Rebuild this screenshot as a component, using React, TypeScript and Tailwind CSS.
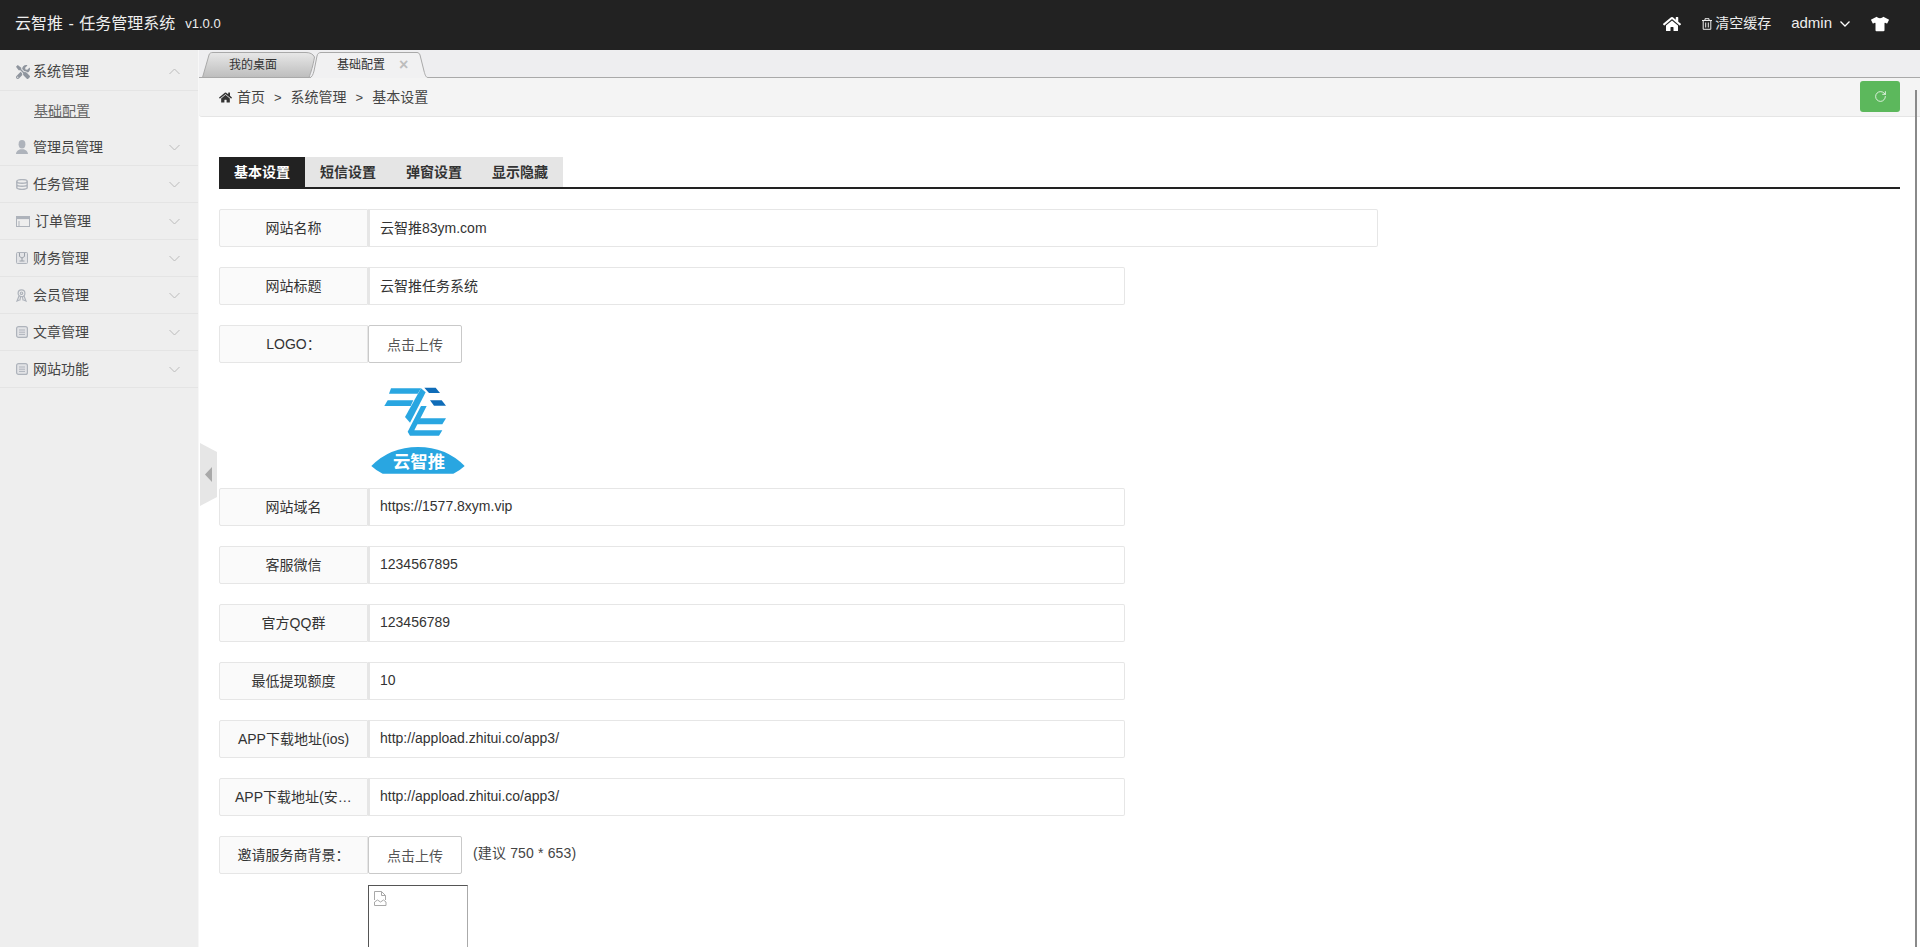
import { RotateCw } from "lucide-react";
import { FaHome, FaTools, FaTshirt } from "react-icons/fa";

// ── Small icons ─────────────────────────────────────────────
function Chevron({ up = false }: { up?: boolean }) {
  return (
    <svg width="11" height="7" viewBox="0 0 11 7" className="mr-[18px] shrink-0 text-[#bbbbbb]">
      <path d={up ? "M0.5 6 L5.5 1 L10.5 6" : "M0.5 1 L5.5 6 L10.5 1"} fill="none" stroke="currentColor" />
    </svg>
  );
}

function UserIcon() {
  return (
    <svg width="12" height="14" viewBox="0 0 12 14" fill="#aeb3bb">
      <ellipse cx="6" cy="4.2" rx="3.4" ry="4.2" />
      <path d="M0 14c0-3 2.6-4 4.2-4.8h3.6C9.4 10 12 11 12 14z" />
    </svg>
  );
}

function DbIcon() {
  return (
    <svg width="12" height="11" viewBox="0 0 12 11" fill="none" stroke="#aeb3bb" strokeWidth="1.4">
      <ellipse cx="6" cy="2.4" rx="5.2" ry="1.8" />
      <path d="M0.8 2.4v6.2c0 1 2.3 1.8 5.2 1.8s5.2-.8 5.2-1.8V2.4M0.8 5.5c0 1 2.3 1.8 5.2 1.8s5.2-.8 5.2-1.8" />
    </svg>
  );
}

function OrderIcon() {
  return (
    <svg width="14" height="11" viewBox="0 0 14 11" fill="none">
      <rect x="0.5" y="0.5" width="13" height="10" stroke="#aeb3bb" />
      <rect x="0.5" y="0.5" width="13" height="2.6" fill="#aeb3bb" />
      <path d="M3 5v5.5" stroke="#aeb3bb" />
    </svg>
  );
}

function MoneyIcon() {
  return (
    <svg width="12" height="12" viewBox="0 0 12 12" fill="none">
      <rect x="0.5" y="0.5" width="11" height="11" rx="1" fill="#e2e3e6" stroke="#aeb3bb" />
      <path d="M3.5 1v3.5L6 6l2.5-1.5V1M3.5 9h5M6 6v3" stroke="#9aa0a8" />
    </svg>
  );
}

function MemberIcon() {
  return (
    <svg width="11" height="13" viewBox="0 0 11 13" fill="none" stroke="#aeb3bb" strokeWidth="1.2">
      <circle cx="5.5" cy="4.2" r="3.4" />
      <circle cx="5.5" cy="4.2" r="1.2" />
      <path d="M3 7l-2 5 2.4-1M8 7l2 5-2.4-1M4.5 8l-.6 3.5M6.5 8l.6 3.5" />
    </svg>
  );
}

function ArticleIcon() {
  return (
    <svg width="12" height="12" viewBox="0 0 12 12" fill="none">
      <rect x="0.6" y="0.6" width="10.8" height="10.8" rx="2" fill="#e2e3e6" stroke="#aeb3bb" strokeWidth="1.2" />
      <path d="M3 4h6M3 6.2h6M3 8.4h6" stroke="#aeb3bb" />
    </svg>
  );
}

function TrashIcon() {
  return (
    <svg width="10" height="12" viewBox="0 0 10 12" fill="none" stroke="#eeeeee">
      <path d="M0 2.5h10M3 2.5V.7h4v1.8M1.2 2.5v8.8h7.6V2.5M3.7 4.5v5M6.3 4.5v5" />
    </svg>
  );
}

function Logo() {
  return (
    <svg width="96" height="102" viewBox="15 -24 288 306">
      <g fill="#29a6e1">
        <polygon points="78,22 168,22 158,38 72,38" />
        <polygon points="168,22 182,34 135,125 120,108" />
        <polygon points="68,58 145,58 137,75 58,75" />
        <polygon points="165,112 243,112 232,130 155,130" />
        <polygon points="168,75 185,75 148,148 232,148 222,164 135,164 128,152" />
      </g>
      <polygon points="178,20 212,20 225,36 192,36" fill="#0f6cb8" />
      <polygon points="195,58 230,58 243,74 207,74" fill="#0f6cb8" />
      <path d="M19 255 Q75 198 159 198 Q243 198 299 255 Q283 270 265 278 L53 278 Q35 270 19 255 Z" fill="#29a6e1" />
      <text x="162" y="262" textAnchor="middle" fontSize="52" fontWeight="700" fill="#ffffff">云智推</text>
    </svg>
  );
}

// ── Sidebar ─────────────────────────────────────────────────
const menus = [
  { name: "管理员管理", icon: <UserIcon /> },
  { name: "任务管理", icon: <DbIcon /> },
  { name: "订单管理", icon: <OrderIcon /> },
  { name: "财务管理", icon: <MoneyIcon /> },
  { name: "会员管理", icon: <MemberIcon /> },
  { name: "文章管理", icon: <ArticleIcon /> },
  { name: "网站功能", icon: <ArticleIcon /> },
];

function Sidebar() {
  return (
    <aside className="w-[199px] shrink-0 bg-[#eeeeee] border-r border-[#f7f7f7] text-[14px] text-[#444444]">
      <div className="h-[41px] pt-[3px] flex items-center border-b border-[#e4e4e4]">
        <span className="w-[33px] pl-[16px] flex">
          <FaTools size={14} color="#8f959e" />
        </span>
        <span className="flex-1">系统管理</span>
        <Chevron up />
      </div>
      <div className="h-[38px] pl-[34px] pt-[3px] flex items-center">
        <a className="underline text-[#666666]">基础配置</a>
      </div>
      {menus.map((m) => (
        <div key={m.name} className="h-[37px] flex items-center border-b border-[#e4e4e4]">
          <span className="min-w-[33px] pl-[16px] pr-[5px] flex items-center">{m.icon}</span>
          <span className="flex-1">{m.name}</span>
          <Chevron />
        </div>
      ))}
    </aside>
  );
}

// ── Tabs & breadcrumb ───────────────────────────────────────
function PageTabs() {
  return (
    <div className="h-[28px] pl-[3px] flex items-end bg-[#eeeef0] border-b border-[#a9a9a9] text-[12px] text-[#333333]">
      <div className="relative w-[113px] h-[26px] -mb-px pl-[27px] flex items-center">
        <svg className="absolute inset-0" width="113" height="26" viewBox="0 0 113 26">
          <defs>
            <linearGradient id="off" x1="0" y1="0" x2="0" y2="1">
              <stop offset="0" stopColor="#e8e8e8" />
              <stop offset="1" stopColor="#bdbdbd" />
            </linearGradient>
          </defs>
          <path d="M0.5 25.5L7 3C7.5 1 9 .5 11 .5H104C108 .5 111 2 112.5 5C111 14 109 20 107 25.5Z" fill="url(#off)" stroke="#a9a9a9" />
        </svg>
        <span className="relative">我的桌面</span>
      </div>
      <div className="relative w-[119px] h-[26px] -ml-[6px] -mb-px pl-[28px] flex items-center">
        <svg className="absolute inset-0" width="119" height="26" viewBox="0 0 119 26">
          <path d="M0.5 26C3 25 4 23 5 19L8 4C8.5 1.5 10 .5 12 .5H108C109.5 .5 110.5 1.5 111 3L115 19C116 23 117 25.5 119 25.5V26Z" fill="#f1f1f2" />
          <path d="M0.5 26C3 25 4 23 5 19L8 4C8.5 1.5 10 .5 12 .5H108C109.5 .5 110.5 1.5 111 3L115 19C116 23 117 25.5 119 25.5" fill="none" stroke="#a9a9a9" />
        </svg>
        <span className="relative">基础配置</span>
        <span className="relative ml-[14px] text-[16px] leading-none font-bold text-[#bdbdbd]">×</span>
      </div>
    </div>
  );
}

function Breadcrumb() {
  return (
    <div className="h-[39px] pl-[20px] pr-[20px] flex items-center justify-between bg-[#f4f4f4] border-b border-[#e5e5e5] rounded-bl-[3px] text-[14px] text-[#444444]">
      <div className="pt-[1px] flex items-center">
        <FaHome size={13} color="#333333" className="mr-[5px]" />
        <span>首页</span>
        <span className="mx-[9px] text-[13px]">&gt;</span>
        <span>系统管理</span>
        <span className="mx-[9px] text-[13px]">&gt;</span>
        <span>基本设置</span>
      </div>
      <button className="w-[40px] h-[31px] -mt-px flex items-center justify-center bg-[#5cb85c] rounded-[3px]">
        <RotateCw size={13} color="#ffffff" strokeWidth={1.4} />
      </button>
    </div>
  );
}

// ── Form rows ───────────────────────────────────────────────
function Label({ children }: { children: string }) {
  return (
    <div className="w-[149px] h-full shrink-0 px-[15px] leading-[36px] text-center truncate bg-[#fafafa] border border-[#e6e6e6] rounded-l-[2px] text-[14px] text-[#333333]">
      {children}
    </div>
  );
}

function TextRow({ label, value, wide = false }: { label: string; value: string; wide?: boolean }) {
  return (
    <div className={`h-[38px] flex ${wide ? "w-[1159px]" : "w-[906px]"}`}>
      <Label>{label}</Label>
      <input
        readOnly
        defaultValue={value}
        className="flex-1 min-w-0 h-full pl-[10px] pb-[2px] bg-white border border-l-2 border-[#e6e6e6] rounded-r-[2px] text-[14px] text-[#333333] outline-none"
      />
    </div>
  );
}

function UploadRow({ label, hint }: { label: string; hint?: string }) {
  return (
    <div className="h-[38px] flex">
      <Label>{label}</Label>
      <button className="w-[94px] h-full pt-[2px] bg-white border border-[#c9c9c9] rounded-[2px] text-[14px] text-[#555555]">
        点击上传
      </button>
      {hint && <span className="ml-[11px] mt-[7px] tracking-[0.15px] text-[14px] text-[#444444]">{hint}</span>}
    </div>
  );
}

const rows = [
  { label: "网站域名", value: "https://1577.8xym.vip" },
  { label: "客服微信", value: "1234567895" },
  { label: "官方QQ群", value: "123456789" },
  { label: "最低提现额度", value: "10" },
  { label: "APP下载地址(ios)", value: "http://appload.zhitui.co/app3/" },
  { label: "APP下载地址(安卓)", value: "http://appload.zhitui.co/app3/" },
];

function BasicForm() {
  return (
    <div className="pt-[40px] pl-[20px] pr-[20px]">
      <div className="flex h-[32px] border-b-2 border-[#222222] text-[14px] font-bold text-[#333333]">
        <div className="w-[86px] h-[32px] bg-[#222222] text-white text-center leading-[30px]">基本设置</div>
        {["短信设置", "弹窗设置", "显示隐藏"].map((t) => (
          <div key={t} className="w-[86px] h-[30px] bg-[#e5e5e5] text-center leading-[30px]">
            {t}
          </div>
        ))}
      </div>

      <div className="mt-[20px] flex flex-col gap-[20px]">
        <TextRow wide label="网站名称" value="云智推83ym.com" />
        <TextRow label="网站标题" value="云智推任务系统" />
        <UploadRow label="LOGO：" />
      </div>

      <div className="h-[125px] pt-[10px] pl-[151px]">
        <Logo />
      </div>

      <div className="flex flex-col gap-[20px]">
        {rows.map((r) => (
          <TextRow key={r.label} label={r.label} value={r.value} />
        ))}
        <UploadRow label="邀请服务商背景：" hint="(建议 750 * 653)" />
      </div>

      <div className="relative mt-[11px] ml-[149px] w-[100px] h-[100px] border border-t-[#555555] border-l-[#555555] border-r-[#aaaaaa] border-b-[#aaaaaa]">
        <svg className="absolute left-[5px] top-[5px]" width="13" height="15" viewBox="0 0 13 15" fill="none" stroke="#a8a8a8">
          <path d="M.5 9V.5h7l4 4V9M7.5.5v4h4M.5 11v3.5h11.5V11M.5 11l3-2 3 2 3-2 2.5 2" />
        </svg>
      </div>
    </div>
  );
}

// ── App ─────────────────────────────────────────────────────
export default function App() {
  return (
    <div className="h-screen flex flex-col overflow-hidden bg-white font-['Liberation_Sans','Noto_Sans_CJK_SC',sans-serif]">
      <header className="h-[50px] shrink-0 pl-[15px] pr-[31px] flex items-center justify-between bg-[#222222] text-[#eeeeee]">
        <div className="flex items-center -mt-[3px]">
          <span className="text-[16px]">
            云智推<span className="mx-[1px]"> - </span>任务管理系统
          </span>
          <span className="ml-[10px] text-[13px]">v1.0.0</span>
        </div>
        <div className="flex items-center -mt-[3px]">
          <FaHome size={18} color="#ffffff" />
          <span className="ml-[21px] mr-[3px] flex">
            <TrashIcon />
          </span>
          <span className="text-[14px]">清空缓存</span>
          <span className="ml-[20px] text-[15px]">admin</span>
          <svg width="10" height="6" viewBox="0 0 10 6" className="ml-[8px]">
            <path d="M.5.5 5 5 9.5.5" fill="none" stroke="#ffffff" strokeWidth="1.3" />
          </svg>
          <FaTshirt size={18} color="#ffffff" className="ml-[21px]" />
        </div>
      </header>

      <div className="relative flex-1 min-h-0 flex">
        <Sidebar />
        <main className="flex-1 min-w-0 overflow-hidden">
          <PageTabs />
          <Breadcrumb />
          <BasicForm />
        </main>

        {/* sidebar collapse handle */}
        <svg className="absolute left-[200px] top-[393px]" width="17" height="63" viewBox="0 0 17 63">
          <path d="M0 0 L17 9 V54 L0 63 Z" fill="#e6e6e6" />
          <path d="M12 24 L5 31.5 L12 39 Z" fill="#a9a9a9" />
        </svg>

        {/* page scrollbar */}
        <div className="absolute right-[3px] top-[40px] bottom-0 w-[2px] bg-[#8a8a8a]" />
      </div>
    </div>
  );
}
